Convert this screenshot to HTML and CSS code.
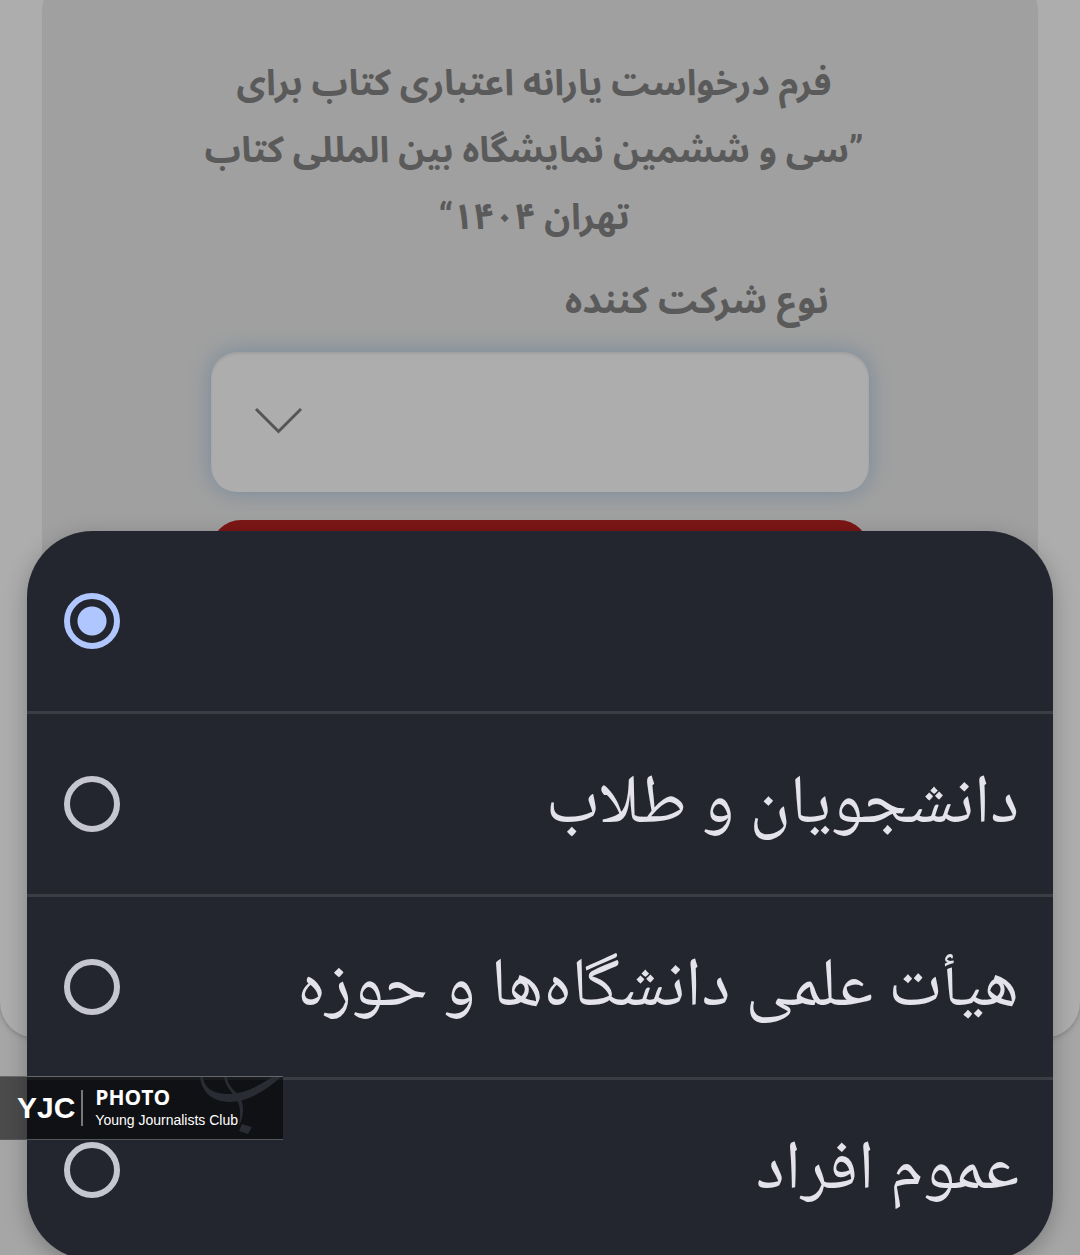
FILE: index.html
```html
<!DOCTYPE html>
<html lang="fa" dir="rtl">
<head>
    <meta charset="UTF-8">
    <meta name="viewport" content="width=device-width, initial-scale=1.0">
    <title>فرم درخواست یارانه اعتباری کتاب</title>
    <link rel="stylesheet" href="styles.css">
</head>
<body>
    <main class="page-card">
        <form class="request-form">
            <h1 class="form-title">فرم درخواست یارانه اعتباری کتاب برای<br>”سی و ششمین نمایشگاه بین المللی کتاب<br>تهران ۱۴۰۴“</h1>
            <label class="form-label" for="participantType">نوع شرکت کننده</label>
            <div class="select-wrap">
                <select class="form-select" id="participantType">
                    <option value=""></option>
                </select>
                <svg class="select-arrow" viewBox="0 0 48 28" fill="none" stroke="#555" stroke-width="3">
                    <path d="M2 2 L24.500 24.500 L47 2"/>
                </svg>
            </div>
            <button class="submit-button" type="button" aria-label="ثبت"></button>
        </form>
    </main>

    <!-- Option picker -->
    <div class="picker">
        <label class="picker-option">
            <span class="option-text"></span>
            <input type="radio" name="participant" aria-label="خالی" checked>
        </label>
        <label class="picker-option">
            <span class="option-text">دانشجویان و طلاب</span>
            <input type="radio" name="participant">
        </label>
        <label class="picker-option">
            <span class="option-text">هیأت علمی دانشگاه‌ها و حوزه</span>
            <input type="radio" name="participant">
        </label>
        <label class="picker-option">
            <span class="option-text">عموم افراد</span>
            <input type="radio" name="participant">
        </label>
    </div>

    <!-- Agency badge -->
    <div class="badge" dir="ltr">
        <span class="badge-name">YJC</span>
        <div class="badge-info">
            <span class="badge-type">PHOTO</span>
            <span class="badge-club">Young Journalists Club</span>
        </div>
        <svg class="badge-mark" viewBox="0 0 84 60" fill="#2a2c34">
            <path d="M1 0 C3 15 13 25 32 25 C52 24 68 12 82 0 L73 0 C58 10 44 17 30 17 C14 17 5 11 4 0 Z"/>
            <path d="M25 0 C27 12 36 17 39 25 C42 32 41 41 40 49 C45 39 45 29 42 22 C38 14 29 11 28 0 Z"/>
            <path d="M43 47 L53 50 L49 57 L40 54 Z"/>
        </svg>
    </div>
</body>
</html>
```
FILE: styles.css
```css
* {
    margin: 0;
    padding: 0;
    box-sizing: border-box;
}

body {
    min-height: 100vh;
    font-family: Roboto, "Noto Sans Arabic", sans-serif;
    background-color: #a6a6a6;
    color: #5a5a5a;
    overflow: hidden;
}

.page-card {
    height: 1038px;
    padding: 0 42px;
    border-radius: 0 0 36px 36px;
    background-color: #adadad;
    box-shadow: 0 1px 5px rgba(0, 0, 0, 0.25);
    overflow: hidden;
}

.request-form {
    display: flex;
    flex-direction: column;
    margin-top: -20px;
    padding: 70px 17% 60px;
    border-radius: 30px;
    background-color: #a0a0a0;
}

.form-title {
    margin: 0 -20px;
    padding-right: 12px;
    font-size: 36px;
    line-height: 67px;
    font-weight: bold;
    text-align: center;
    white-space: nowrap;
}

.form-label {
    margin: 16px 40px 18px;
    font-size: 37px;
    line-height: 67px;
    font-weight: bold;
}

.select-wrap {
    position: relative;
}

.form-select {
    display: block;
    width: 100%;
    height: 140px;
    border: none;
    border-radius: 26px;
    background-color: #adadad;
    box-shadow: 0 0 22px #75899b, inset 0 2px 3px rgba(0, 0, 0, 0.08);
    appearance: none;
    outline: none;
}

.select-arrow {
    position: absolute;
    left: 43px;
    top: 55px;
    width: 48px;
    height: 28px;
    pointer-events: none;
}

.submit-button {
    height: 140px;
    margin-top: 28px;
    border: none;
    border-radius: 30px;
    background-color: #7c1616;
}

.picker {
    position: absolute;
    top: 531px;
    left: 27px;
    right: 27px;
    border-radius: 66px;
    background-color: #24262f;
    box-shadow: 0 6px 22px rgba(0, 0, 0, 0.25);
    overflow: hidden;
}

.picker-option {
    display: flex;
    align-items: center;
    justify-content: space-between;
    height: 183px;
    padding: 0 34px 0 37px;
    border-bottom: 3px solid #3b3d45;
    cursor: pointer;
}

.picker-option:last-child {
    height: 180px;
    border-bottom: none;
}

.option-text {
    font-family: "Noto Naskh Arabic UI", "Noto Naskh Arabic", "DejaVu Sans", sans-serif;
    font-size: 69px;
    color: #e4e2ea;
}

.picker-option input {
    width: 56px;
    height: 56px;
    border: 6px solid #c5c6d0;
    border-radius: 50%;
    appearance: none;
}

.picker-option input:checked {
    border-color: #b0c6ff;
    background: radial-gradient(circle, #b0c6ff 14px, transparent 15px);
}

.badge {
    position: absolute;
    top: 1076px;
    left: 0;
    display: flex;
    align-items: center;
    width: 283px;
    height: 64px;
    padding-left: 17px;
    border-top: 1px solid #66676b;
    border-bottom: 1px solid #55565b;
    background-color: rgba(0, 0, 0, 0.55);
    color: #fff;
}

.badge-name {
    padding-right: 6px;
    font-family: "Liberation Sans", sans-serif;
    font-size: 30px;
    line-height: 36px;
    font-weight: bold;
    border-right: 2px solid #77787c;
}

.badge-info {
    display: flex;
    flex-direction: column;
    padding-left: 12px;
    z-index: 1;
}

.badge-type {
    font-family: "Open Sans", sans-serif;
    font-size: 21px;
    line-height: 24px;
    font-weight: bold;
}

.badge-club {
    font-family: "Liberation Sans", sans-serif;
    font-size: 14px;
    line-height: 22px;
}

.badge-mark {
    position: absolute;
    top: 0;
    right: 0;
    width: 84px;
    height: 60px;
}
```
